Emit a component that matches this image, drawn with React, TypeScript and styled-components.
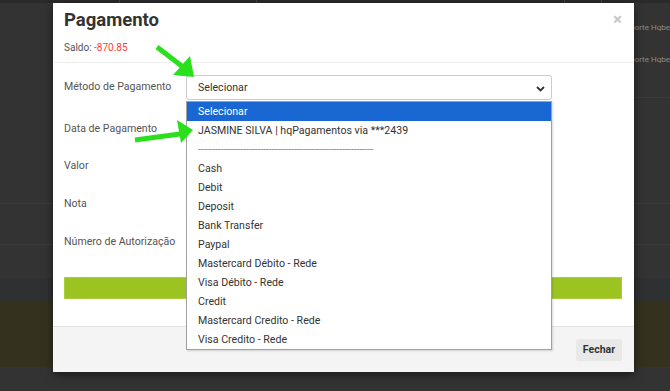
import styled, { createGlobalStyle } from 'styled-components'

const GlobalStyle = createGlobalStyle`
	html, body {
		margin: 0;
		padding: 0;
		height: 391px;
		overflow: hidden;
		background: #333333;
	}
	body {
		font-family: Roboto, "Noto Sans", Arial, sans-serif;
	}
	* {
		box-sizing: border-box;
	}
`

const methods = [
	'Cash',
	'Debit',
	'Deposit',
	'Bank Transfer',
	'Paypal',
	'Mastercard Débito - Rede',
	'Visa Débito - Rede',
	'Credit',
	'Mastercard Credito - Rede',
	'Visa Credito - Rede',
]

const fields = [
	{ label: 'Método de Pagamento', gap: 17 },
	{ label: 'Data de Pagamento', gap: 12 },
	{ label: 'Valor', gap: 13 },
	{ label: 'Nota', gap: 13 },
	{ label: 'Número de Autorização', gap: 0 },
]

export default function App(): JSX.Element {
	return (
		<>
			<GlobalStyle />
			<Page>
				{/* dimmed page behind the modal */}
				<TopBar>
					<TopCell $w={120} />
					<TopCell $w={137} />
					<TopCell $w={308} />
					<TopCell $w={37} />
				</TopBar>
				<BgRow $h={95}>
					<SideCell>
						<SideText>Suporte Hqbe</SideText>
						<SideText>Suporte Hqbe</SideText>
					</SideCell>
				</BgRow>
				<BgRow $h={106} $line />
				<BgRow $h={41} $line />
				<BgRow $h={33} />
				<BgRow $h={23} $bg="#2e3032" />
				<BgRow $h={66} $bg="#34321f" />

				<Modal>
					<Header>
						<Title>Pagamento</Title>
						<Saldo>
							Saldo: <Negative>-870.85</Negative>
						</Saldo>
						<Close>×</Close>
					</Header>
					<Body>
						{fields.map((f, i) => (
							<FieldRow key={f.label} $gap={f.gap}>
								<Label>{f.label}</Label>
								{i === 0 && (
									<SelectBox>
										<SelectValue>Selecionar</SelectValue>
										<Chevron width="9" height="6" viewBox="0 0 9 6">
											<path d="M1 1l3.5 3.5L8 1" fill="none" stroke="#333" strokeWidth="1.8" />
										</Chevron>
										<Dropdown>
											<Option $selected>Selecionar</Option>
											<Option>JASMINE SILVA | hqPagamentos via ***2439</Option>
											<Option $muted>{'-'.repeat(62)}</Option>
											{methods.map((m) => (
												<Option key={m}>{m}</Option>
											))}
										</Dropdown>
									</SelectBox>
								)}
							</FieldRow>
						))}
						<SaveBar aria-label="Salvar" />
					</Body>
					<Footer>
						<CloseButton>Fechar</CloseButton>
					</Footer>
				</Modal>

				<Arrows width="670" height="391" viewBox="0 0 670 391">
					<line x1="157" y1="47" x2="183" y2="67" stroke="#2adf1c" strokeWidth="5" />
					<polygon points="194,77 173,75 190,56" fill="#2adf1c" />
					<line x1="135" y1="140" x2="180" y2="134" stroke="#2adf1c" strokeWidth="5" />
					<polygon points="193,130 177,120 181,143" fill="#2adf1c" />
				</Arrows>
			</Page>
		</>
	)
}

const Page = styled.div`
	position: relative;
	height: 391px;
	overflow: hidden;
`
const TopBar = styled.div`
	display: flex;
	height: 3px;
	background: #2a2a2a;
`
const TopCell = styled.div<{ $w: number }>`
	width: ${({ $w }) => $w}px;
	border-right: 1px solid #444;
`
const BgRow = styled.div<{ $h: number; $bg?: string; $line?: boolean }>`
	display: flex;
	justify-content: flex-end;
	height: ${({ $h }) => $h}px;
	background: ${({ $bg }) => $bg || '#333333'};
	border-bottom: ${({ $line }) => ($line ? '1px solid #3b3b3b' : 'none')};
`
const SideCell = styled.div`
	width: 49px;
	padding-top: 19px;
	border-bottom: 1px solid #3b3b3b;
	display: flex;
	flex-direction: column;
	gap: 20px;
	overflow: hidden;
`
const SideText = styled.div`
	font-size: 8px;
	line-height: 12px;
	color: #8c8c8c;
	white-space: nowrap;
`
const Modal = styled.div`
	position: absolute;
	left: 53px;
	top: 3px;
	width: 581px;
	background: #fff;
	box-shadow: 0 3px 9px rgba(0, 0, 0, 0.5);
`
const Header = styled.div`
	position: relative;
	height: 60px;
	padding: 6px 11px 0;
	border-bottom: 1px solid #eeeeee;
`
const Title = styled.h4`
	margin: 0;
	font-size: 18.5px;
	line-height: 22px;
	font-weight: 700;
	color: #333;
`
const Saldo = styled.div`
	margin-top: 11px;
	font-size: 10px;
	line-height: 12px;
	color: #555;
`
const Negative = styled.span`
	color: #ff3c3c;
`
const Close = styled.span`
	position: absolute;
	right: 12px;
	top: 6px;
	font-size: 17px;
	line-height: 20px;
	color: #c8c8c8;
	font-weight: 700;
`
const Body = styled.div`
	padding: 12px 12px 27px 11px;
`
const FieldRow = styled.div<{ $gap: number }>`
	display: flex;
	height: 25px;
	margin-bottom: ${({ $gap }) => $gap}px;
`
const Label = styled.div`
	width: 122px;
	padding-top: 5px;
	font-size: 10.6px;
	line-height: 14px;
	color: #555;
`
const SelectBox = styled.div`
	position: relative;
	width: 366px;
	height: 25px;
	border: 1px solid #cccccc;
	border-radius: 3px;
	padding-left: 11px;
	display: flex;
	align-items: center;
`
const SelectValue = styled.span`
	font-size: 10.6px;
	color: #333;
`
const Chevron = styled.svg`
	position: absolute;
	right: 6px;
	top: 10px;
`
const Dropdown = styled.div`
	position: absolute;
	left: -1px;
	top: 25px;
	width: 366px;
	background: #fff;
	border: 1px solid #a0a0a0;
	box-shadow: 1px 1px 2px rgba(0, 0, 0, 0.15);
	z-index: 5;
`
const Option = styled.div<{ $selected?: boolean; $muted?: boolean }>`
	height: 19px;
	line-height: 19px;
	padding-left: 11px;
	font-size: 10.6px;
	white-space: nowrap;
	overflow: hidden;
	letter-spacing: ${({ $muted }) => ($muted ? '-0.1px' : 'normal')};
	background: ${({ $selected }) => ($selected ? '#1967d2' : '#fff')};
	color: ${({ $selected, $muted }) => ($selected ? '#fff' : $muted ? '#8a8a8a' : '#333')};
`
const SaveBar = styled.button`
	display: block;
	width: 100%;
	height: 22px;
	margin-top: 22px;
	padding: 0;
	background: #9bc423;
	border: 1px solid #a8cf3e;
`
const Footer = styled.div`
	display: flex;
	justify-content: flex-end;
	align-items: center;
	height: 46px;
	padding-right: 12px;
	background: #f4f4f4;
	border-top: 1px solid #e4e4e4;
`
const CloseButton = styled.button`
	height: 22px;
	padding: 0 7px;
	border: none;
	border-radius: 2px;
	background: #e8e8e8;
	font-family: Roboto, Arial, sans-serif;
	font-size: 10.5px;
	font-weight: 700;
	color: #333;
`
const Arrows = styled.svg`
	position: absolute;
	left: 0;
	top: 0;
	pointer-events: none;
	z-index: 10;
`
